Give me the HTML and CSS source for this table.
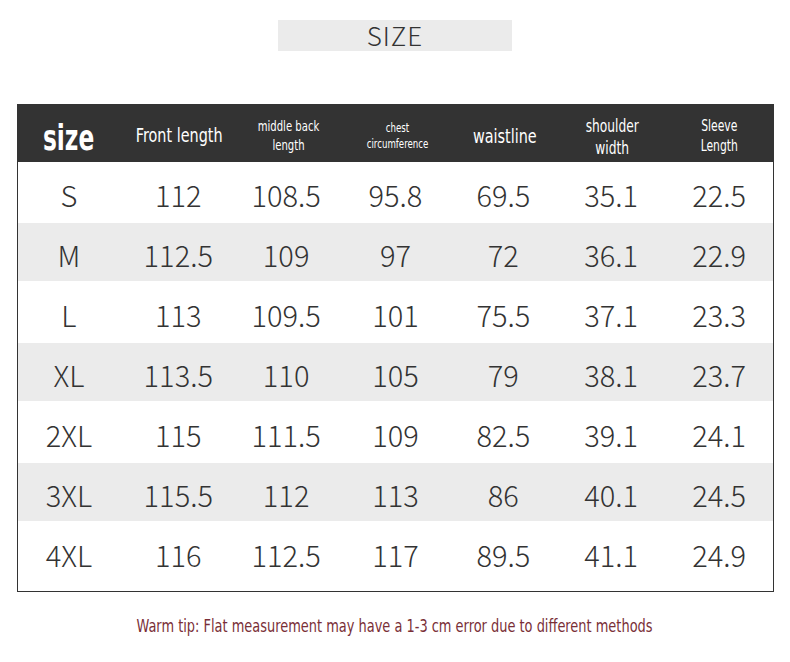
FILE: index.html
```html
<!DOCTYPE html>
<html>
<head>
<meta charset="utf-8">
<link rel="stylesheet" href="styles.css">
</head>
<body>
<div class="page">
  <div class="title">SIZE</div>
  <div class="chart">
    <div class="row head">
      <div class="cell h-size"><span class="narrow">size</span></div>
      <div class="cell h-front"><span class="narrow">Front length</span></div>
      <div class="cell h-middle"><span class="narrow">middle back<br>length</span></div>
      <div class="cell h-chest"><span class="narrow">chest<br>circumference</span></div>
      <div class="cell h-waist"><span class="narrow">waistline</span></div>
      <div class="cell h-shoulder"><span class="narrow">shoulder<br>width</span></div>
      <div class="cell h-sleeve"><span class="narrow">Sleeve<br>Length</span></div>
    </div>
    <div class="row"><div class="cell">S</div><div class="cell">112</div><div class="cell">108.5</div><div class="cell">95.8</div><div class="cell">69.5</div><div class="cell">35.1</div><div class="cell">22.5</div></div>
    <div class="row alt"><div class="cell">M</div><div class="cell">112.5</div><div class="cell">109</div><div class="cell">97</div><div class="cell">72</div><div class="cell">36.1</div><div class="cell">22.9</div></div>
    <div class="row"><div class="cell">L</div><div class="cell">113</div><div class="cell">109.5</div><div class="cell">101</div><div class="cell">75.5</div><div class="cell">37.1</div><div class="cell">23.3</div></div>
    <div class="row alt"><div class="cell">XL</div><div class="cell">113.5</div><div class="cell">110</div><div class="cell">105</div><div class="cell">79</div><div class="cell">38.1</div><div class="cell">23.7</div></div>
    <div class="row"><div class="cell">2XL</div><div class="cell">115</div><div class="cell">111.5</div><div class="cell">109</div><div class="cell">82.5</div><div class="cell">39.1</div><div class="cell">24.1</div></div>
    <div class="row alt"><div class="cell">3XL</div><div class="cell">115.5</div><div class="cell">112</div><div class="cell">113</div><div class="cell">86</div><div class="cell">40.1</div><div class="cell">24.5</div></div>
    <div class="row"><div class="cell">4XL</div><div class="cell">116</div><div class="cell">112.5</div><div class="cell">117</div><div class="cell">89.5</div><div class="cell">41.1</div><div class="cell">24.9</div></div>
  </div>
  <div class="tip"><span class="narrow">Warm tip: Flat measurement may have a 1-3 cm error due to different methods</span></div>
</div>
</body>
</html>
```
FILE: styles.css
```css
html, body {
  margin: 0;
  padding: 0;
  background: #ffffff;
}
.page {
  width: 790px;
  padding-top: 20px;
  display: flex;
  flex-direction: column;
  align-items: center;
}
.title {
  width: 234px;
  height: 31px;
  background: #ebebeb;
  color: #333333;
  font-family: "Noto Sans CJK SC", "Noto Sans", sans-serif;
  font-weight: 300;
  font-size: 26px;
  line-height: 29px;
  text-align: center;
  letter-spacing: 1px;
}
.chart {
  margin-top: 53px;
  align-self: flex-start;
  margin-left: 17px;
  width: 755px;
  border: 1px solid #333333;
  border-top: none;
  padding-bottom: 9px;
  box-sizing: content-box;
}
.row {
  display: grid;
  grid-template-columns: repeat(7, 1fr);
  height: 60px;
  box-sizing: border-box;
}
.row.alt {
  background: #ebebeb;
  border-top: 1px solid #ffffff;
  border-bottom: 1px solid #ffffff;
}
.cell {
  display: flex;
  align-items: center;
  justify-content: center;
  text-align: center;
  font-family: "Noto Sans CJK SC", "Noto Sans", sans-serif;
  font-weight: 300;
  font-size: 29px;
  color: #333333;
  padding-top: 4px;
}
.row .cell:first-child {
  padding-right: 6px;
}
.row .cell:nth-child(2) {
  padding-right: 3px;
}
.row .cell:nth-child(3) {
  padding-right: 3px;
}
.row.head {
  height: 58px;
  background: #333333;
  margin: 0 -1px;
  padding: 0 1px;
}
.head .cell {
  color: #ffffff;
  font-family: "DejaVu Sans Condensed", "Liberation Sans Narrow", sans-serif;
  font-weight: 400;
  padding-top: 4px;
}
.narrow {
  display: inline-block;
  transform: scaleX(0.8);
  white-space: nowrap;
}
.h-size { font-size: 36px; font-weight: 700 !important; padding-top: 9px !important; }
.h-size .narrow { transform: scaleX(0.72); }
.h-front { font-size: 20px; line-height: 1; }
.h-middle { font-size: 14px; line-height: 19px; padding-top: 6px !important; }
.h-chest { font-size: 12px; line-height: 16px; padding-top: 5px !important; }
.h-waist { font-size: 20px; padding-top: 5px !important; }
.h-shoulder { font-size: 17px; line-height: 22px; padding-top: 8px !important; }
.h-sleeve { font-size: 15px; line-height: 20px; padding-top: 6px !important; }
.tip {
  margin-top: 23px;
  color: #7a2f37;
  font-family: "DejaVu Sans Condensed", "Liberation Sans Narrow", sans-serif;
  font-size: 18px;
  text-align: center;
}
```
